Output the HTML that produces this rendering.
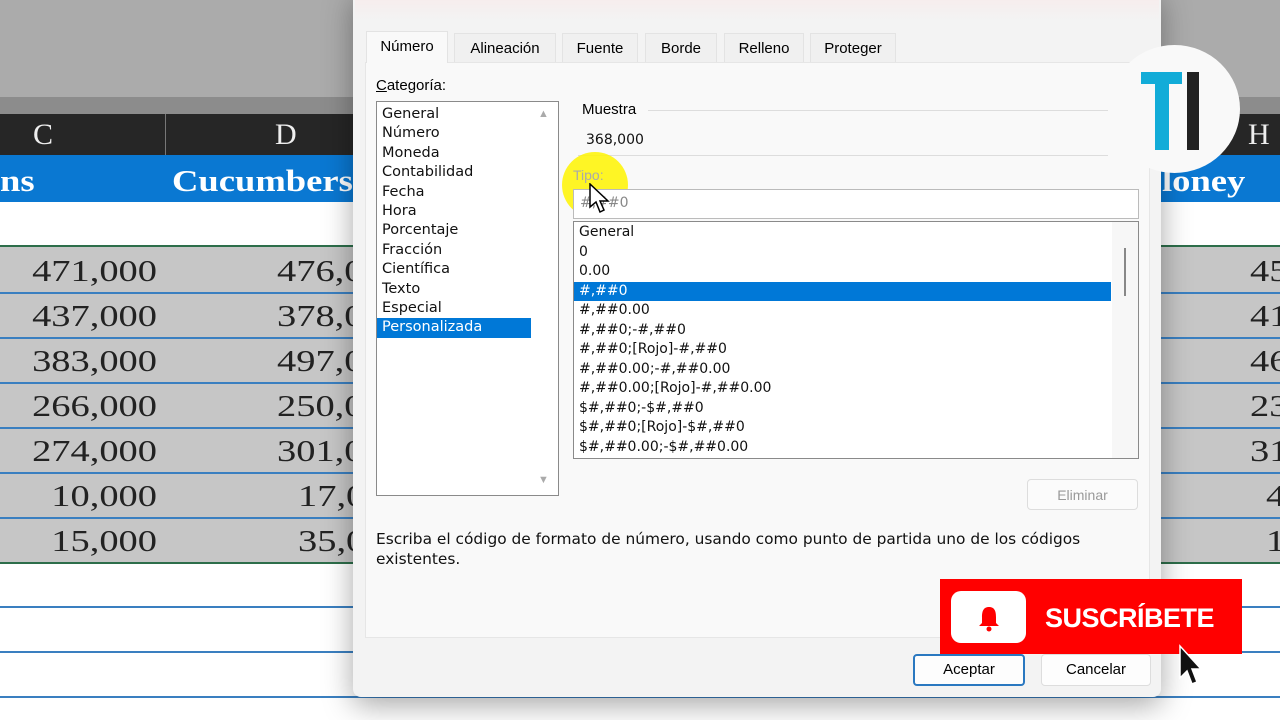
<!DOCTYPE html>
<html><head><meta charset="utf-8"><style>
*{margin:0;padding:0;box-sizing:border-box}
body{width:1280px;height:720px;overflow:hidden;position:relative;background:#fff;font-family:"Liberation Sans",sans-serif}
.abs{position:absolute}
.serif{font-family:"Liberation Serif",serif}
.num{position:absolute;font-family:"Liberation Serif",serif;font-size:31px;color:#222;text-align:right;transform:scaleX(1.24);transform-origin:right center}
.numl{position:absolute;font-family:"Liberation Serif",serif;font-size:31px;color:#222;transform:scaleX(1.24);transform-origin:left center}
.line{position:absolute;left:0;width:1280px;height:2px;background:#3a7fc0}
.d{font-family:"DejaVu Sans",sans-serif;font-size:14px;color:#111}
.cat div{height:19.4px;line-height:19.4px;padding-left:5px}
.fmt div{height:19.5px;line-height:19.5px;padding-left:5px}
.tab{position:absolute;top:33px;height:29px;line-height:30px;font-size:15px;text-align:center;border:1px solid #e3e3e3;border-bottom:none;background:#f0f0f0}
</style></head><body>
<div class="abs" style="left:0;top:0;width:1280px;height:97px;background:#ababab"></div>
<div class="abs" style="left:0;top:97px;width:1280px;height:17px;background:#8c8c8c"></div>
<div class="abs" style="left:0;top:114px;width:1280px;height:41px;background:#262626"></div>
<div class="abs" style="left:165px;top:114px;width:1px;height:41px;background:#777"></div>
<div class="abs serif" style="left:33px;top:118px;color:#eee;font-size:30px">C</div>
<div class="abs serif" style="left:275px;top:118px;color:#eee;font-size:30px">D</div>
<div class="abs serif" style="left:1248px;top:118px;color:#eee;font-size:30px">H</div>
<div class="abs" style="left:0;top:155px;width:1280px;height:47px;background:#0a78d2"></div>
<div class="abs serif" style="left:0;top:163px;color:#fff;font-size:31px;font-weight:bold;transform:scaleX(1.18);transform-origin:left">ns</div>
<div class="abs serif" style="left:172px;top:163px;color:#fff;font-size:31px;font-weight:bold;transform:scaleX(1.18);transform-origin:left">Cucumbers</div>
<div class="abs serif" style="left:1162px;top:163px;color:#fff;font-size:31px;font-weight:bold;transform:scaleX(1.18);transform-origin:left">loney</div>
<div class="abs" style="left:0;top:245px;width:1280px;height:2px;background:#2d6e4a"></div>
<div class="abs" style="left:0;top:247px;width:1280px;height:315px;background:#c6c6c6"></div>
<div class="abs" style="left:0;top:562px;width:1280px;height:2px;background:#2d6e4a"></div>
<div class="line" style="top:292px"></div><div class="line" style="top:337px"></div><div class="line" style="top:382px"></div><div class="line" style="top:427px"></div><div class="line" style="top:472px"></div><div class="line" style="top:517px"></div>
<div class="line" style="top:606px"></div><div class="line" style="top:651px"></div><div class="line" style="top:696px"></div>
<div class="num" style="left:0;width:157px;top:253px">471,000</div>
<div class="num" style="left:0;width:157px;top:298px">437,000</div>
<div class="num" style="left:0;width:157px;top:343px">383,000</div>
<div class="num" style="left:0;width:157px;top:388px">266,000</div>
<div class="num" style="left:0;width:157px;top:433px">274,000</div>
<div class="num" style="left:0;width:157px;top:478px">10,000</div>
<div class="num" style="left:0;width:157px;top:523px">15,000</div>
<div class="numl" style="left:277px;top:253px">476,0</div>
<div class="numl" style="left:277px;top:298px">378,0</div>
<div class="numl" style="left:277px;top:343px">497,0</div>
<div class="numl" style="left:277px;top:388px">250,0</div>
<div class="numl" style="left:277px;top:433px">301,0</div>
<div class="numl" style="left:298px;top:478px">17,0</div>
<div class="numl" style="left:298px;top:523px">35,0</div>
<div class="numl" style="left:1250px;top:253px">45</div>
<div class="numl" style="left:1250px;top:298px">41</div>
<div class="numl" style="left:1250px;top:343px">46</div>
<div class="numl" style="left:1250px;top:388px">23</div>
<div class="numl" style="left:1250px;top:433px">31</div>
<div class="numl" style="left:1266px;top:478px">4</div>
<div class="numl" style="left:1266px;top:523px">1</div>

<div class="abs" style="left:353px;top:-10px;width:808px;height:707px;background:#f3f3f3;border-radius:8px;box-shadow:0 8px 30px rgba(0,0,0,.35)"></div>
<div class="abs" style="left:355px;top:0;width:804px;height:20px;background:linear-gradient(#f6eded,#f3f3f3)"></div>
<div class="abs" style="left:365px;top:62px;width:785px;height:576px;background:#f9f9f9;border:1px solid #e6e6e6"></div>
<div class="tab" style="left:366px;width:82px;background:#f9f9f9;top:31px;height:32px">Número</div>
<div class="tab" style="left:454px;width:102px">Alineación</div>
<div class="tab" style="left:562px;width:76px">Fuente</div>
<div class="tab" style="left:645px;width:72px">Borde</div>
<div class="tab" style="left:724px;width:80px">Relleno</div>
<div class="tab" style="left:810px;width:86px">Proteger</div>
<div class="abs" style="left:376px;top:77px;font-size:15px"><u>C</u>ategoría:</div>
<div class="abs d cat" style="left:376px;top:101px;width:183px;height:395px;background:#fff;border:1px solid #8a8a8a;padding-top:3px;font-size:14.5px">
<div>General</div><div>Número</div><div>Moneda</div><div>Contabilidad</div><div>Fecha</div><div>Hora</div><div>Porcentaje</div><div>Fracción</div><div>Científica</div><div>Texto</div><div>Especial</div><div style="background:#0078d7;color:#fff;width:154px">Personalizada</div>
</div>
<div class="abs" style="left:538px;top:108px;color:#aaa;font-size:11px">▲</div>
<div class="abs" style="left:538px;top:474px;color:#aaa;font-size:11px">▼</div>
<div class="abs" style="left:582px;top:101px;font-size:15px">Muestra</div>
<div class="abs" style="left:648px;top:110px;width:460px;height:1px;background:#ddd"></div>
<div class="abs d" style="left:586px;top:132px">368,000</div>
<div class="abs" style="left:578px;top:155px;width:530px;height:1px;background:#ddd"></div>
<div class="abs" style="left:562px;top:152px;width:66px;height:66px;border-radius:50%;background:rgba(255,245,0,.85)"></div>
<div class="abs" style="left:573px;top:167px;font-size:14px;color:#aaa">Tipo:</div>
<div class="abs" style="left:573px;top:189px;width:566px;height:30px;background:#fff;border:1px solid #bbb"></div>
<div class="abs d" style="left:580px;top:195px;color:#888">#,##0</div>
<svg class="abs" style="left:588px;top:183px" width="24" height="32" viewBox="0 0 24 32"><path d="M2 1 L2 24 L8 19 L12 29 L16 27 L12 18 L20 18 Z" fill="#fff" stroke="#000" stroke-width="1.5"/></svg>
<div class="abs d fmt" style="left:573px;top:221px;width:566px;height:238px;background:#fff;border:1px solid #8a8a8a;padding-top:1px;overflow:hidden">
<div>General</div><div>0</div><div>0.00</div><div style="background:#0078d7;color:#fff;width:537px">#,##0</div><div>#,##0.00</div><div>#,##0;-#,##0</div><div>#,##0;[Rojo]-#,##0</div><div>#,##0.00;-#,##0.00</div><div>#,##0.00;[Rojo]-#,##0.00</div><div>$#,##0;-$#,##0</div><div>$#,##0;[Rojo]-$#,##0</div><div>$#,##0.00;-$#,##0.00</div>
</div>
<div class="abs" style="left:1112px;top:222px;width:26px;height:236px;background:#f7f7f7"></div>
<div class="abs" style="left:1124px;top:248px;width:2px;height:48px;background:#888"></div>
<div class="abs" style="left:1027px;top:479px;width:111px;height:31px;border:1px solid #ddd;border-radius:4px;background:#fbfbfb;color:#999;font-size:14px;text-align:center;line-height:30px">Eliminar</div>
<div class="abs d" style="left:376px;top:529px;line-height:20px;font-size:15.4px">Escriba el código de formato de número, usando como punto de partida uno de los códigos<br>existentes.</div>
<div class="abs" style="left:913px;top:654px;width:112px;height:32px;border:2px solid #2a78c0;border-radius:4px;background:#fdfdfd;font-size:15px;text-align:center;line-height:28px">Aceptar</div>
<div class="abs" style="left:1041px;top:654px;width:110px;height:32px;border:1px solid #ddd;border-radius:4px;background:#fdfdfd;font-size:15px;text-align:center;line-height:30px">Cancelar</div>

<div class="abs" style="left:1109px;top:45px;width:131px;height:128px;border-radius:50%;background:#f9f9f9"></div>
<div class="abs" style="left:1141px;top:72px;width:41px;height:12px;background:#12acd8"></div>
<div class="abs" style="left:1155px;top:72px;width:14px;height:78px;background:#12acd8"></div>
<div class="abs" style="left:1187px;top:72px;width:12px;height:78px;background:#222"></div>

<div class="abs" style="left:940px;top:579px;width:302px;height:75px;background:#f00"></div>
<div class="abs" style="left:951px;top:591px;width:75px;height:52px;background:#fff;border-radius:10px"></div>
<svg class="abs" style="left:975px;top:604px" width="28" height="28" viewBox="0 0 28 28"><path d="M14 3 C8 3 7 8 7 13 L7 19 L4 22 L24 22 L21 19 L21 13 C21 8 20 3 14 3Z" fill="#f00"/><circle cx="14" cy="25" r="2.5" fill="#f00"/></svg>
<div class="abs" style="left:1045px;top:603px;color:#fff;font-size:27px;font-weight:bold;letter-spacing:-0.5px">SUSCRÍBETE</div>
<svg class="abs" style="left:1178px;top:644px" width="26" height="44" viewBox="0 0 26 44"><path d="M2 2 L2 34 L9 27 L14 40 L19 38 L14 25 L23 25 Z" fill="#111" stroke="#fff" stroke-width="1.5"/></svg>
</body></html>
